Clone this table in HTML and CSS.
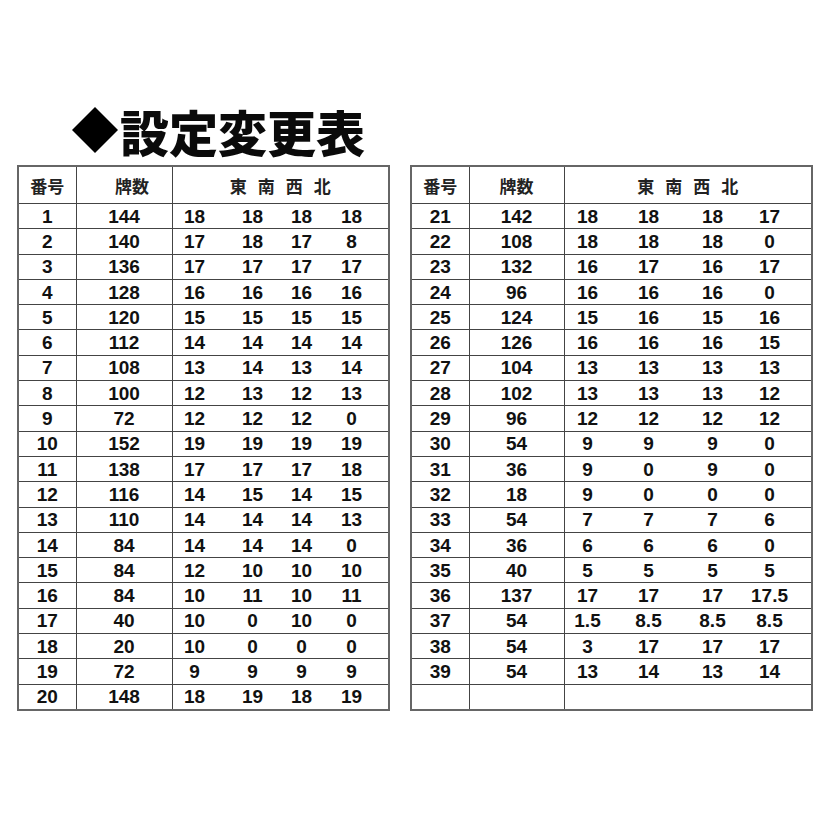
FILE: index.html
```html
<!DOCTYPE html>
<html lang="ja">
<head>
<meta charset="utf-8">
<title>設定変更表</title>
<link rel="stylesheet" href="styles.css">
</head>
<body>
<div class="page">
  <h1 class="title"><svg class="diamond" viewBox="0 0 46 46" width="46" height="46"><polygon points="23,0 46,23 23,46 0,23" fill="#000"/></svg><span>設定変更表</span></h1>
  <div class="tables">
    <table class="tbl left">
      <colgroup><col class="c1"><col class="c2"><col class="c3"></colgroup>
      <thead>
        <tr><th>番号</th><th class="shift">牌数</th><th><span class="winds"><span>東</span><span>南</span><span>西</span><span>北</span></span></th></tr>
      </thead>
      <tbody id="lb"></tbody>
    </table>
    <table class="tbl right">
      <colgroup><col class="c1"><col class="c2"><col class="c3"></colgroup>
      <thead>
        <tr><th>番号</th><th>牌数</th><th><span class="winds"><span>東</span><span>南</span><span>西</span><span>北</span></span></th></tr>
      </thead>
      <tbody id="rb"></tbody>
    </table>
  </div>
</div>
<script>
var L = [
[1,144,18,18,18,18],[2,140,17,18,17,8],[3,136,17,17,17,17],[4,128,16,16,16,16],
[5,120,15,15,15,15],[6,112,14,14,14,14],[7,108,13,14,13,14],[8,100,12,13,12,13],
[9,72,12,12,12,0],[10,152,19,19,19,19],[11,138,17,17,17,18],[12,116,14,15,14,15],
[13,110,14,14,14,13],[14,84,14,14,14,0],[15,84,12,10,10,10],[16,84,10,11,10,11],
[17,40,10,0,10,0],[18,20,10,0,0,0],[19,72,9,9,9,9],[20,148,18,19,18,19]];
var R = [
[21,142,18,18,18,17],[22,108,18,18,18,0],[23,132,16,17,16,17],[24,96,16,16,16,0],
[25,124,15,16,15,16],[26,126,16,16,16,15],[27,104,13,13,13,13],[28,102,13,13,13,12],
[29,96,12,12,12,12],[30,54,9,9,9,0],[31,36,9,0,9,0],[32,18,9,0,0,0],
[33,54,7,7,7,6],[34,36,6,6,6,0],[35,40,5,5,5,5],[36,137,17,17,17,"17.5"],
[37,54,"1.5","8.5","8.5","8.5"],[38,54,3,17,17,17],[39,54,13,14,13,14],["","","","","",""]];
function fill(id, data){
  var tb = document.getElementById(id), h = "";
  data.forEach(function(r){
    h += "<tr><td>"+r[0]+"</td><td>"+r[1]+"</td><td><div class=\"vals\">";
    for (var i=2;i<6;i++) h += "<span>"+r[i]+"</span>";
    h += "</div></td></tr>";
  });
  tb.innerHTML = h;
}
fill("lb", L); fill("rb", R);
</script>
</body>
</html>
```

FILE: styles.css
```css
html, body {
  margin: 0;
  padding: 0;
  background: #fff;
}
.page {
  width: 822px;
  height: 822px;
  padding-top: 101px;
  box-sizing: border-box;
}
.title {
  margin: 0 0 0 72px;
  height: 58px;
  display: flex;
  align-items: center;
  font-family: "Noto Sans CJK JP", "Noto Sans CJK SC", sans-serif;
  font-weight: 900;
  font-size: 49px;
  line-height: 1;
  color: #0a0a0a;
}
.diamond {
  margin-right: 2px;
  flex: none;
}
.tables {
  display: flex;
  gap: 20px;
  margin-top: 6px;
  padding-left: 17px;
  align-items: flex-start;
}
.tbl {
  border-collapse: collapse;
  table-layout: fixed;
  border: 2px solid #666;
  height: 546px;
  font-family: "Liberation Sans", Arial, sans-serif;
  font-weight: 700;
  color: #111;
}
.tbl.left { width: 373px; }
.tbl.right { width: 403px; }
.tbl.left .c1 { width: 58px; }
.tbl.left .c2 { width: 96px; }
.tbl.right .c1 { width: 58px; }
.tbl.right .c2 { width: 95px; }
.tbl th, .tbl td {
  border: 1px solid #444;
  padding: 0;
  text-align: center;
  vertical-align: middle;
}
.tbl th {
  height: 36px;
  font-family: "Noto Sans CJK JP", "Noto Sans CJK SC", sans-serif;
  font-size: 17px;
  font-weight: 700;
  color: #222;
}
.tbl th.shift { padding-left: 16px; }
.winds {
  display: inline-flex;
  gap: 11px;
}
.tbl td {
  font-size: 19px;
  line-height: 1;
  height: 24px;
}
.vals {
  display: flex;
}
.vals span {
  width: 40px;
  flex: none;
  text-align: center;
  white-space: nowrap;
}
.left .vals span:nth-child(1) { margin-left: 2px; }
.left .vals span:nth-child(2) { margin-left: 18px; }
.left .vals span:nth-child(3) { margin-left: 9px; }
.left .vals span:nth-child(4) { margin-left: 10px; }
.right .vals span:nth-child(1) { margin-left: 3px; }
.right .vals span:nth-child(2) { margin-left: 21px; }
.right .vals span:nth-child(3) { margin-left: 24px; }
.right .vals span:nth-child(4) { margin-left: 17px; }
```
